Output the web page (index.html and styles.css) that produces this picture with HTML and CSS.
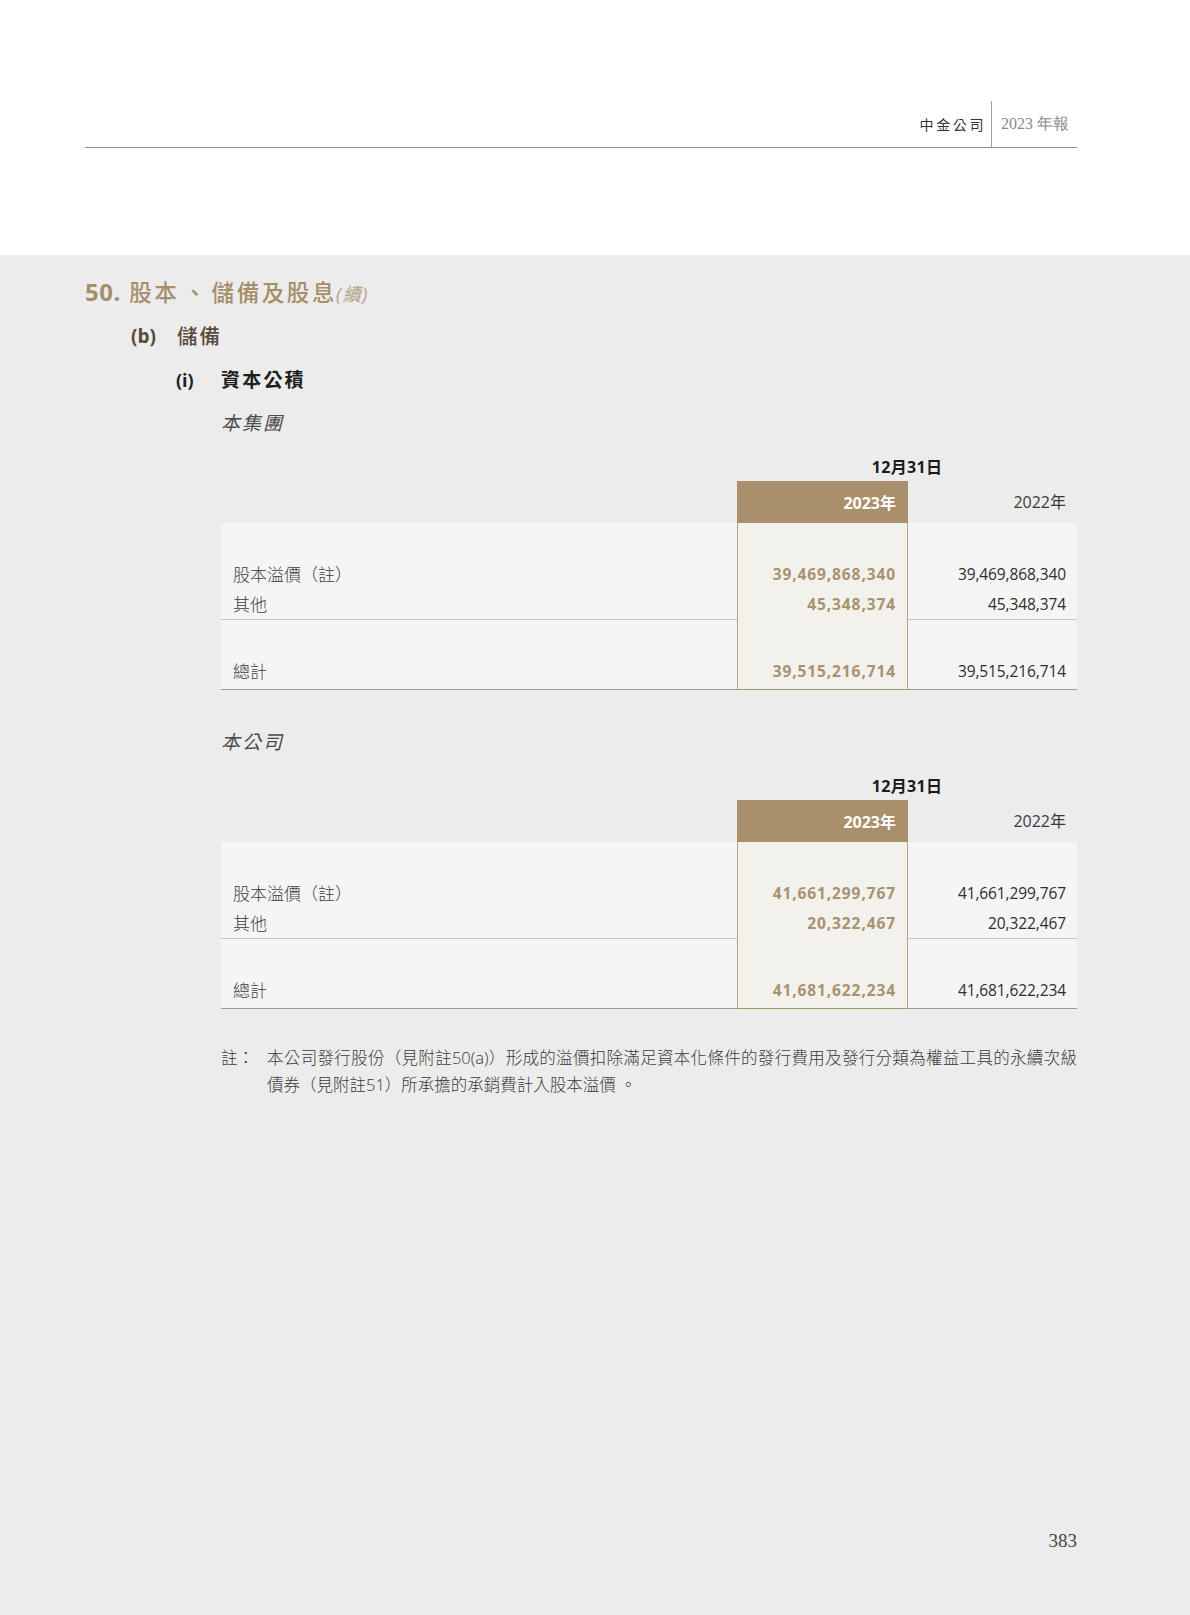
FILE: index.html
```html
<!DOCTYPE html>
<html lang="zh-Hant">
<head>
<meta charset="utf-8">
<title>中金公司 2023 年報</title>
<link rel="stylesheet" href="styles.css">
</head>
<body>
<div class="top">
  <div class="runhead">
    <span class="co">中金公司</span><span class="vdiv"></span><span class="yr">2023 年報</span>
  </div>
</div>
<div class="main">
  <h1 class="h1"><span class="num">50.</span> 股本<span class="dun">、</span>儲備及股息<span class="cont">(續)</span></h1>
  <h2 class="h2"><span class="lab">(b)</span><span>儲備</span></h2>
  <h3 class="h3"><span class="lab">(i)</span><span>資本公積</span></h3>

  <div class="block">
    <div class="sub">本集團</div>
    <div class="tbl">
      <div class="cap"><span></span><span class="capt">12月31日</span></div>
      <div class="hrow">
        <div class="hl"></div>
        <div class="h23">2023<span class="cj">年</span></div>
        <div class="h22">2022<span class="cj">年</span></div>
      </div>
      <div class="grp">
        <div class="lbl"><div>股本溢價（註）</div><div>其他</div></div>
        <div class="c23"><div>39,469,868,340</div><div>45,348,374</div></div>
        <div class="c22"><div>39,469,868,340</div><div>45,348,374</div></div>
      </div>
      <div class="grp last">
        <div class="lbl"><div>總計</div></div>
        <div class="c23"><div>39,515,216,714</div></div>
        <div class="c22"><div>39,515,216,714</div></div>
      </div>
    </div>

    <div class="sub sub2">本公司</div>
    <div class="tbl">
      <div class="cap"><span></span><span class="capt">12月31日</span></div>
      <div class="hrow">
        <div class="hl"></div>
        <div class="h23">2023<span class="cj">年</span></div>
        <div class="h22">2022<span class="cj">年</span></div>
      </div>
      <div class="grp">
        <div class="lbl"><div>股本溢價（註）</div><div>其他</div></div>
        <div class="c23"><div>41,661,299,767</div><div>20,322,467</div></div>
        <div class="c22"><div>41,661,299,767</div><div>20,322,467</div></div>
      </div>
      <div class="grp last">
        <div class="lbl"><div>總計</div></div>
        <div class="c23"><div>41,681,622,234</div></div>
        <div class="c22"><div>41,681,622,234</div></div>
      </div>
    </div>

    <div class="note">
      <span class="nlab">註：</span>
      <p class="ntext">本公司發行股份（見附註50(a)）形成的溢價扣除滿足資本化條件的發行費用及發行分類為權益工具的永續次級債券（見附註51）所承擔的承銷費計入股本溢價 。</p>
    </div>
  </div>

  <div class="pnum">383</div>
</div>
</body>
</html>
```

FILE: styles.css
```css
* { box-sizing: border-box; }
html, body { margin: 0; padding: 0; }
body {
  width: 1190px;
  font-family: "Open Sans", "Noto Sans CJK TC", sans-serif;
  color: #333;
  background: #ececec;
}

/* running head */
.top {
  height: 255px;
  background: #ffffff;
  padding: 101px 113px 0 85px;
}
.runhead {
  height: 47px;
  display: flex;
  justify-content: flex-end;
  align-items: center;
  border-bottom: 1px solid #8c8c8c;
}
.co {
  font-family: "Noto Sans CJK TC", sans-serif;
  font-size: 14px;
  letter-spacing: 2.6px;
  color: #333;
  margin-right: 5px;
}
.vdiv {
  align-self: stretch;
  width: 1px;
  background: #a0a0a0;
}
.yr {
  font-family: "Liberation Serif", "Times New Roman", "DejaVu Serif", serif;
  font-size: 16px;
  color: #8a8a8a;
  margin: 0 8px 0 9px;
}

/* main area */
.main {
  height: 1360px;
  padding: 23px 113px 62px 85px;
  display: flex;
  flex-direction: column;
}
.h1 {
  margin: 0;
  font-family: "Open Sans", "Noto Sans CJK TC", sans-serif;
  font-size: 22.5px;
  line-height: 28px;
  font-weight: 500;
  letter-spacing: 2.6px;
  color: #a68e6b;
}
.h1 .num { letter-spacing: 0.5px; font-weight: 700; font-size: 24px; }
.h1 .dun { margin: 0 3px 0 4px; }
.cont {
  font-size: 18px;
  font-weight: 400;
  font-style: italic;
  letter-spacing: 1.5px;
  color: #b5a284;
  margin-left: -1px;
}
.h2 {
  margin: 14px 0 0 0;
  display: flex;
  font-size: 20.5px;
  line-height: 28px;
  font-weight: 500;
  color: #594a3b;
  letter-spacing: 2px;
  padding-left: 46px;
}
.h2 .lab { width: 46px; letter-spacing: 0; font-size: 19px; font-weight: 700; }
.h3 {
  margin: 16px 0 0 0;
  display: flex;
  font-size: 19px;
  line-height: 28px;
  font-weight: 700;
  color: #1e1e1e;
  letter-spacing: 2.2px;
  padding-left: 91px;
}
.h3 .lab { width: 45px; letter-spacing: 0; font-size: 18px; }

.block { padding-left: 136px; }
.sub {
  margin-top: 14px;
  font-family: "Noto Sans CJK TC", sans-serif;
  font-size: 19px;
  line-height: 28px;
  font-style: italic;
  letter-spacing: 2px;
  color: #4a4a4a;
}
.sub2 { margin-top: 37px; }

/* tables */
.tbl { width: 856px; margin-top: 18px; }
.cap, .hrow, .grp {
  display: grid;
  grid-template-columns: 516px 171px 169px;
}
.cap { height: 27px; }
.capt {
  grid-column: 2 / span 2;
  text-align: center;
  font-size: 16px;
  line-height: 26px;
  font-weight: 700;
  color: #1a1a1a;
  letter-spacing: 0.3px;
}
.hrow { height: 42px; }
.hl, .h22 { border-bottom: 1px solid #8e8e8e; }
.h23, .h22 {
  text-align: right;
  font-size: 16px;
  line-height: 42px;
}
.h23 {
  background: #a98f6b;
  color: #ffffff;
  font-weight: 700;
  padding-right: 12px;
}
.h22 {
  color: #3a3a3a;
  padding-right: 11px;
  line-height: 41px;
}
.cj { font-family: "Noto Sans CJK TC", sans-serif; }

.grp .lbl, .grp .c22 {
  background: #f5f5f5;
  border-bottom: 1px solid #c4c4c4;
}
.grp .c23 {
  background: #f3f1ec;
  border-left: 1px solid #b4a381;
  border-right: 1px solid #b4a381;
}
.grp > div { padding-top: 36px; padding-bottom: 0; }
.grp.last > div { padding-bottom: 3px; }
.grp.last .lbl, .grp.last .c22 { border-bottom: 1px solid #9a9a9a; }
.grp.last .c23 { border-bottom: 1px solid #a8966f; }

.lbl > div, .c23 > div, .c22 > div { height: 30px; line-height: 30px; }
.lbl {
  padding-left: 12px;
  font-family: "Noto Sans CJK TC", sans-serif;
  font-size: 17px;
  font-weight: 300;
  color: #3c3c3c;
}
.c23 {
  text-align: right;
  padding-right: 11px;
  font-size: 15.5px;
  font-weight: 700;
  letter-spacing: 0.9px;
  color: #a8926f;
}
.c22 {
  text-align: right;
  padding-right: 11px;
  font-size: 15.5px;
  font-weight: 400;
  letter-spacing: -0.1px;
  color: #2e2e2e;
}

/* note */
.note {
  display: flex;
  width: 856px;
  margin-top: 35px;
  font-family: "Noto Sans CJK TC", sans-serif;
  font-size: 16.5px;
  font-weight: 300;
  line-height: 27px;
  color: #3a3a3a;
}
.nlab { width: 46px; flex: none; }
.ntext {
  margin: 0;
  flex: 1;
  text-align: justify;
  font-family: "Open Sans", "Noto Sans CJK TC", sans-serif;
  font-weight: 300;
}

.pnum {
  margin-top: auto;
  text-align: right;
  font-family: "Liberation Serif", "Times New Roman", "DejaVu Serif", serif;
  font-size: 19px;
  line-height: 24px;
  color: #444;
}
```
